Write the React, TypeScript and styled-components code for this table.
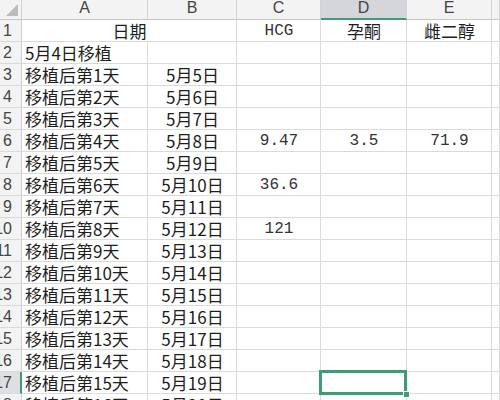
import React from "react";
import styled, { createGlobalStyle, css } from "styled-components";

const Global = createGlobalStyle`
  html, body { margin: 0; padding: 0; background: #ffffff; overflow: hidden; }
  body { width: 500px; height: 400px; }
`;

const CJK = `"Noto Sans CJK SC", "Noto Sans", sans-serif`;
const MONO = `"Liberation Mono", "Noto Sans CJK SC", monospace`;

const Sheet = styled.div`
  display: grid;
  grid-template-columns: 22px 126px 89px 84px 86px 85px 1fr;
  grid-template-rows: 20px repeat(18, 22px);
  width: 500px;
  height: 400px;
  overflow: hidden;
  background: #ffffff;
`;

const Corner = styled.div`
  position: relative;
  background: #f3f3f3;
  border-right: 1px solid #cfcfcf;
  border-bottom: 1px solid #c6c6c6;
  box-sizing: border-box;
  &::after {
    content: "";
    position: absolute;
    right: 3px;
    bottom: 3px;
    width: 0;
    height: 0;
    border-left: 12px solid transparent;
    border-bottom: 12px solid #bcbcbc;
  }
`;

const ColHead = styled.div<{ $active?: boolean }>`
  box-sizing: border-box;
  display: flex;
  align-items: center;
  justify-content: center;
  padding-bottom: 3px;
  background: ${(p) => (p.$active ? "#d4d6da" : "#f3f3f3")};
  border-right: 1px solid #d3d3d3;
  border-bottom: ${(p) => (p.$active ? "2px solid #3a9d73" : "1px solid #c6c6c6")};
  font-family: "Liberation Sans", sans-serif;
  font-size: 16px;
  color: #444;
  line-height: 1;
`;

const RowHead = styled.div<{ $active?: boolean }>`
  box-sizing: border-box;
  display: flex;
  align-items: center;
  justify-content: flex-end;
  padding-right: ${(p) => (p.$active ? 8 : 9)}px;
  overflow: hidden;
  white-space: nowrap;
  background: ${(p) => (p.$active ? "#dedfe1" : "#f3f3f3")};
  border-right: ${(p) => (p.$active ? "2px solid #3a9d73" : "1px solid #cfcfcf")};
  border-bottom: 1px solid #dadada;
  font-family: "Liberation Sans", sans-serif;
  font-size: 16px;
  color: #444;
`;

const Cell = styled.div<{
  $align?: "left" | "center";
  $span?: number;
  $mono?: boolean;
  $selected?: boolean;
}>`
  position: relative;
  box-sizing: border-box;
  display: flex;
  align-items: center;
  justify-content: ${(p) => (p.$align === "left" ? "flex-start" : "center")};
  padding: 0 2px 0 3px;
  white-space: nowrap;
  border-right: 1px solid #dadada;
  border-bottom: 1px solid #dadada;
  grid-column: ${(p) => (p.$span ? `span ${p.$span}` : "auto")};
  font-family: ${(p) => (p.$mono ? MONO : CJK)};
  font-size: ${(p) => (p.$mono ? "16px" : "17px")};
  color: ${(p) => (p.$mono ? "#333" : "#1e1e1e")};
  line-height: 22px;
  ${(p) =>
    p.$selected &&
    css`
      &::before {
        content: "";
        position: absolute;
        left: -2px;
        top: -2px;
        right: -1px;
        bottom: -2px;
        border: 3px solid #3a9d73;
        box-sizing: border-box;
        z-index: 2;
      }
      &::after {
        content: "";
        position: absolute;
        right: -4px;
        bottom: -5px;
        width: 5px;
        height: 5px;
        background: #3a9d73;
        border: 1px solid #ffffff;
        z-index: 3;
      }
    `}
`;

type Row = { a?: string; b?: string; c?: string; d?: string; e?: string };

const rows: Row[] = [];
rows.push({ a: "5月4日移植" });
for (let n = 1; n <= 16; n++) {
  rows.push({ a: `移植后第${n}天`, b: `5月${n + 4}日` });
}
rows[4].c = "9.47";
rows[4].d = "3.5";
rows[4].e = "71.9";
rows[6].c = "36.6";
rows[8].c = "121";

const letters = ["A", "B", "C", "D", "E", ""];

export default function App() {
  return (
    <>
      <Global />
      <Sheet>
        <Corner />
        {letters.map((l) => (
          <ColHead key={l || "F"} $active={l === "D"}>
            {l}
          </ColHead>
        ))}

        <RowHead>1</RowHead>
        <Cell $span={2}>日期</Cell>
        <Cell $mono>HCG</Cell>
        <Cell>孕酮</Cell>
        <Cell>雌二醇</Cell>
        <Cell />

        {rows.map((r, i) => {
          const num = i + 2;
          return (
            <React.Fragment key={num}>
              <RowHead $active={num === 17}>{num}</RowHead>
              <Cell $align="left">{r.a}</Cell>
              <Cell>{r.b}</Cell>
              <Cell $mono>{r.c}</Cell>
              <Cell $mono $selected={num === 17}>
                {r.d}
              </Cell>
              <Cell $mono>{r.e}</Cell>
              <Cell />
            </React.Fragment>
          );
        })}
      </Sheet>
    </>
  );
}
